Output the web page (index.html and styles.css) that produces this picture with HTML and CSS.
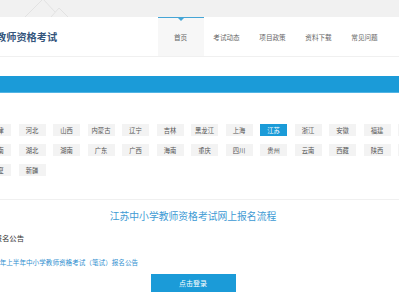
FILE: index.html
```html
<!DOCTYPE html>
<html lang="zh-CN">
<head>
	<meta charset="UTF-8"/>
	<title>中小学教师资格考试</title>
	<meta name="viewport" content="width=device-width, initial-scale=1.0"/>
	<link rel="stylesheet" href="styles.css">
</head>
<body>
	<div class="topbar">
		<div class="wrap">
			<svg class="hills" width="60" height="17" viewBox="0 0 60 17">
				<polyline points="0,17 18,-1 30,12" fill="none" stroke="#e2e2e2" stroke-width="1"/>
				<polyline points="26,17 34,8 43,17" fill="none" stroke="#e2e2e2" stroke-width="1"/>
			</svg>
		</div>
	</div>

	<header class="header">
		<div class="wrap header-in">
			<h1 class="logo">中小学教师资格考试</h1>
			<nav class="menu">
				<a href="#" class="active">首页</a>
				<a href="#">考试动态</a>
				<a href="#">项目政策</a>
				<a href="#">资料下载</a>
				<a href="#">常见问题</a>
			</nav>
		</div>
	</header>

	<div class="banner"></div>

	<div class="wrap">
		<div class="provinces">
			<a href="#">北京</a>
			<a href="#">天津</a>
			<a href="#">河北</a>
			<a href="#">山西</a>
			<a href="#">内蒙古</a>
			<a href="#">辽宁</a>
			<a href="#">吉林</a>
			<a href="#">黑龙江</a>
			<a href="#">上海</a>
			<a href="#" class="active">江苏</a>
			<a href="#">浙江</a>
			<a href="#">安徽</a>
			<a href="#">福建</a>
			<a href="#">江西</a>
			<a href="#">山东</a>
			<a href="#">河南</a>
			<a href="#">湖北</a>
			<a href="#">湖南</a>
			<a href="#">广东</a>
			<a href="#">广西</a>
			<a href="#">海南</a>
			<a href="#">重庆</a>
			<a href="#">四川</a>
			<a href="#">贵州</a>
			<a href="#">云南</a>
			<a href="#">西藏</a>
			<a href="#">陕西</a>
			<a href="#">甘肃</a>
			<a href="#">青海</a>
			<a href="#">宁夏</a>
			<a href="#">新疆</a>
		</div>
	</div>

	<div class="wrap">
		<div class="content">
			<h2 class="title">江苏中小学教师资格考试网上报名流程</h2>
			<h3 class="sub">报名公告</h3>
			<a href="#" class="notice">2019年上半年中小学教师资格考试（笔试）报名公告</a>
			<div class="actions">
				<a href="#" class="btn">点击登录</a>
			</div>
		</div>
	</div>
</body>
</html>
```

FILE: styles.css
```css
* {
	margin: 0;
	padding: 0;
	box-sizing: border-box;
}

body {
	background-color: #fff;
	color: #333;
	font-family: "Noto Sans CJK SC", "Noto Sans", sans-serif;
	overflow: hidden;
}

a {
	text-decoration: none;
}

.wrap {
	width: 500px;
	margin-left: calc(50% - 250px);
}

.topbar {
	height: 17px;
	background-color: #f1f1f1;
}
.hills {
	display: block;
	margin-left: 75px;
}

.header {
	height: 40px;
	border-bottom: 1px solid #f0f0f0;
}
.header-in {
	display: flex;
	justify-content: space-between;
	align-items: stretch;
	height: 100%;
	padding-left: 16px;
	padding-right: 62px;
}
.logo {
	display: flex;
	align-items: center;
	font-size: 10.2px;
	font-weight: bold;
	color: #34557c;
}

.menu {
	display: flex;
}
.menu a {
	position: relative;
	display: flex;
	justify-content: center;
	align-items: center;
	width: 46px;
	font-size: 6.6px;
	color: #666;
}
.menu a.active {
	background-color: #f7f7f7;
	border-top: 1px solid #45a5d6;
	padding-bottom: 1px;
}
.menu a.active::after {
	content: "";
	position: absolute;
	top: 0;
	left: 50%;
	margin-left: -3px;
	border-left: 3px solid transparent;
	border-right: 3px solid transparent;
	border-top: 3px solid #45a5d6;
}

.banner {
	height: 17px;
	margin-top: 19px;
	background-color: #1b9bd8;
	border-bottom: 1px solid #52b4e4;
}

.provinces {
	display: flex;
	flex-wrap: wrap;
	padding: 31px 0 15px;
	border-bottom: 1px solid #f0f0f0;
}
.provinces a {
	display: flex;
	justify-content: center;
	align-items: center;
	width: 27px;
	height: 12px;
	margin: 0 7.5px 8px 0;
	background-color: #f3f3f3;
	color: #555;
	font-size: 6.3px;
}
.provinces a.active {
	background-color: #1b9bd8;
	color: #fff;
}

.content {
	width: 487px;
	padding-top: 9px;
}
.title {
	text-align: center;
	font-size: 9.8px;
	font-weight: normal;
	color: #3d9ad4;
}
.sub {
	margin: 9px 0 0 45px;
	font-size: 7.4px;
	font-weight: normal;
	color: #333;
}
.notice {
	display: block;
	margin: 14px 0 0 35.5px;
	font-size: 6.6px;
	color: #2f8fd0;
}
.actions {
	display: flex;
	justify-content: center;
	margin-top: 7px;
}
.btn {
	display: flex;
	justify-content: center;
	align-items: center;
	width: 85px;
	height: 18px;
	background-color: #1b9bd8;
	color: #fff;
	font-size: 7px;
}
```
